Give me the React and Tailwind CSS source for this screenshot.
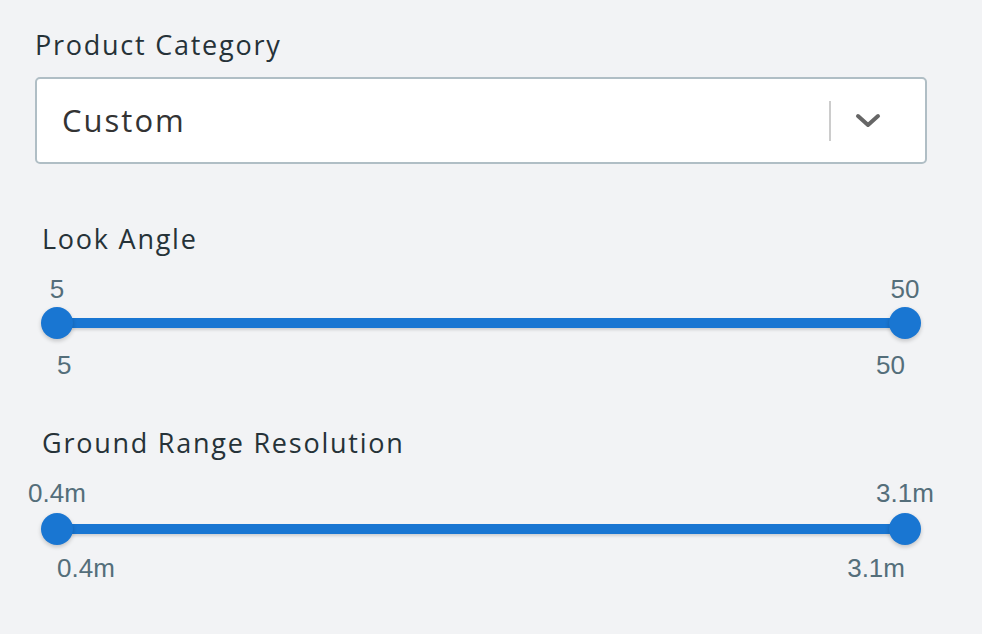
import React from "react";

const num = "whitespace-nowrap font-['Liberation_Sans',Arial,sans-serif] text-[26px] leading-[28px] text-[#546e7a]";

function RangeSlider({ label, min, max, gapTop, spacer, upper, lower }) {
  return (
    <div className="flex flex-col">
      <div className="pl-[7px] text-[27px] leading-[34px] tracking-[0.065em] text-[#263238]">
        {label}
      </div>
      <div className={"relative ml-[22px] w-[848px] " + gapTop}>
        <div className={spacer} />
        <div className="relative h-[10px] bg-[#1976d2] shadow-[0_2px_3px_rgba(0,0,0,0.15)]">
          <div className="absolute left-[-16px] top-[-11px] h-[32px] w-[32px] rounded-full bg-[#1976d2] shadow-[0_2px_4px_rgba(0,0,0,0.2)]" />
          <div className="absolute right-[-16px] top-[-11px] h-[32px] w-[32px] rounded-full bg-[#1976d2] shadow-[0_2px_4px_rgba(0,0,0,0.2)]" />
          <div className={"absolute left-0 flex w-0 justify-center " + upper}>
            <span className={num}>{min}</span>
          </div>
          <div className={"absolute right-0 flex w-0 justify-center " + upper}>
            <span className={num}>{max}</span>
          </div>
        </div>
        <div className={"flex justify-between " + lower + " " + num}>
          <span>{min}</span>
          <span>{max}</span>
        </div>
      </div>
    </div>
  );
}

export default function App() {
  return (
    <div className="h-[634px] w-[982px] overflow-hidden bg-[#f2f3f5] font-['Open_Sans',sans-serif]">
      <div className="flex flex-col px-[35px] pt-[28px]">
        <div className="text-[27px] leading-[34px] tracking-[0.065em] text-[#263238]">Product Category</div>
        <div className="mt-[15px] flex h-[87px] w-[892px] items-center rounded-[5px] border-2 border-[#b0bec5] bg-white pl-[25px] pr-[20px]">
          <span className="flex-1 text-[31px] tracking-[0.065em] text-[#333333]">Custom</span>
          <div className="h-[40px] w-[2px] bg-[#cccccc]" />
          <div className="flex w-[74px] items-center justify-center">
            <svg width="26" height="16" viewBox="0 0 26 16">
              <polyline points="3,3 13,12 23,3" fill="none" stroke="#666666" strokeWidth="4" strokeLinecap="round" strokeLinejoin="round" />
            </svg>
          </div>
        </div>
        <div className="mt-[58px]">
          <RangeSlider
            label="Look Angle"
            min="5"
            max="50"
            gapTop="mt-[31px]"
            spacer="h-[31px]"
            upper="bottom-[25px]"
            lower="mt-[23px]"
          />
        </div>
        <div className="mt-[47px]">
          <RangeSlider
            label="Ground Range Resolution"
            min="0.4m"
            max="3.1m"
            gapTop="mt-[30px]"
            spacer="h-[34px]"
            upper="bottom-[27px]"
            lower="mt-[20px]"
          />
        </div>
      </div>
    </div>
  );
}
